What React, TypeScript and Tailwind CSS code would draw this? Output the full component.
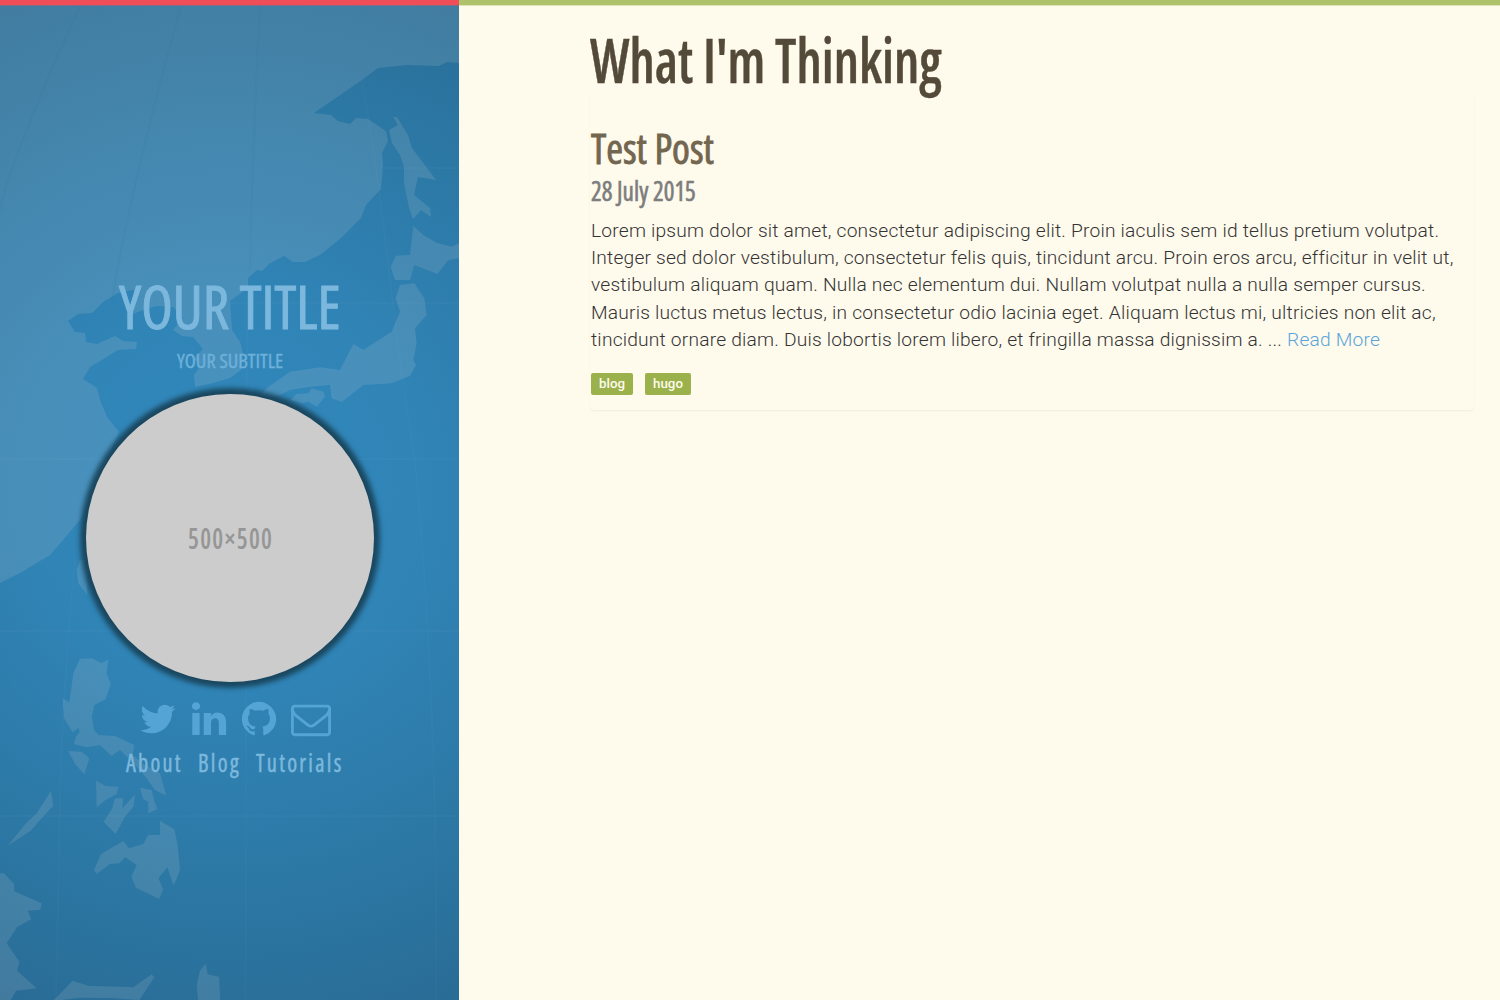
import { useLayoutEffect, useRef, useState, type ReactNode } from "react";

/* Squeezes a line of display text to a fixed width. */
function Fit({ w, className = "", children }: { w: number; className?: string; children: ReactNode }) {
  const ref = useRef<HTMLSpanElement>(null);
  const [scale, setScale] = useState(1);
  useLayoutEffect(() => {
    setScale(w / ref.current!.offsetWidth);
  }, [w]);
  return (
    <span className="block shrink-0" style={{ width: w }}>
      <span
        ref={ref}
        className={"inline-block origin-left whitespace-nowrap " + className}
        style={{ transform: `scaleX(${scale})` }}
      >
        {children}
      </span>
    </span>
  );
}

const DISPLAY = "font-['Open_Sans',sans-serif] [font-stretch:75%]";

const LAND = "rgba(250,232,225,0.12)";

function WorldMap() {
  return (
    <svg className="absolute inset-0 h-full w-full" viewBox="0 0 459 1000" preserveAspectRatio="none" aria-hidden="true">
      <defs>
        <radialGradient id="sea" gradientUnits="userSpaceOnUse" cx="230" cy="490" r="560">
          <stop offset="0" stopColor="#3289bd" />
          <stop offset="0.35" stopColor="#3084b6" />
          <stop offset="0.7" stopColor="#2c78a5" />
          <stop offset="1" stopColor="#296c96" />
        </radialGradient>
      </defs>
      <rect width="459" height="1000" fill="url(#sea)" />
      <g fill={LAND}>
        <path d="M0 0H459V63L447 62 439 66 408 65 378 68 362 80 314 113 331 115 338 121 350 124 356 118 368 119 386 131 388 141 382 153 383 165 381 189 366 205 361 218 340 239 320 255 305 262 293 262 284 256 269 264 262 271 257 270 248 278V288L230 301 232 330 240 342 243 353 241 370 230 378 213 383 195 387 194 375 200 367 194 358 203 349 193 337 182 336 173 330 183 318 173 307 157 306 143 310 123 318 133 312 137 297 133 290 118 293 103 302 92 313 78 314 68 321 75 332 85 333 86 342 97 344 115 336 123 341 137 342 136 349 118 350 105 358 90 367 83 379 97 388 100 400 107 417 119 432 100 475 80 520 63 540 50 555 20 573 0 583Z" />
        <path d="M393 117L397 117 408 135 412 148 436 180 418 177 414 195 430 208 431 217 421 210 413 219 409 208 404 183 404 167 400 155 392 143 389 130 398 125Z" />
        <g transform="translate(300 30) scale(.33333)">
          <path d="M340 588L370 615 410 638 455 650 477 640V685L445 690 412 732 343 705 330 750H285L272 710 288 677 330 675Z" />
        </g>
        <g transform="translate(0 250) scale(.33333)">
          <path d="M1200 105L1243 100 1273 145 1280 195 1245 235 1250 280 1240 330 1248 345 1230 378 1175 400 1090 405 1025 456 995 445 990 405 930 410 870 420 830 440 780 440 800 415 870 365 960 352 1020 360 1060 282 1090 300 1175 245 1200 185 1187 145Z" />
          <path d="M870 450L890 432 925 430 935 415 970 425 975 440 950 470 925 455 905 460Z" />
        </g>
        <g transform="translate(0 540) scale(.33333)">
          <path d="M240 60L230 90 235 130 262 165 262 60Z" />
          <path d="M240 356L275 355 305 370 325 358 320 400 332 432 317 478 283 495 275 530 282 570 295 585 345 588 403 615 398 645 430 672 480 700 499 767 465 750 440 715 400 668 360 630 335 647 300 615 260 622 222 612 228 590 240 575 235 563 218 577 192 535 188 475 208 487 220 400Z" />
          <path d="M205 633L245 635 268 655 253 703 225 672Z" />
          <path d="M288 722L317 738 355 740 350 762 317 780 290 802Z" />
          <path d="M345 775H370L367 805 405 764 400 800 375 830 347 882 311 845 337 805Z" />
          <path d="M420 743L455 750 462 780 472 808 445 820V785L430 778Z" />
          <path d="M153 753L160 797 125 835 92 872 23 917 78 850 110 820Z" />
          <path d="M480 842L523 868 533 915 540 990 521 1037 502 982 475 1015 490 1048 477 1077 408 1043 394 1010 410 975 376 952 358 970 330 972 290 1002 282 990 303 942 370 903 387 925 430 912 445 885H480Z" />
          <path d="M0 1000H12L42 1032 43 1054 125 1090 121 1109 84 1112 93 1138 51 1161 20 1210 58 1265 51 1292 110 1345 48 1352 32 1380H0Z" />
          <path d="M162 1380L218 1322 265 1337 400 1342 455 1303 463 1312 418 1380 330 1374 240 1373 185 1380Z" />
          <path d="M617 1272L623 1303 657 1310 661 1380H594L590 1335 600 1292Z" />
        </g>
      </g>
      <g fill="none" stroke="#ffffff" strokeOpacity="0.02" strokeWidth="2">
        <path d="M383 168H459M230 303H459M0 459H459M0 631H459M0 816H459" />
        <path d="M248 278Q245 500 246 700T245 1000M362 80Q376 160 390 280T415 460Q438 700 436 1000M75 560Q62 700 60 800T56 1000" />
      </g>
      <g fill="none" stroke="#1f5f8c" strokeOpacity="0.06" strokeWidth="2">
        <path d="M260 6Q252 160 250 270M181 6Q130 190 112 300M80 6Q10 160 0 210" />
      </g>
    </svg>
  );
}

const ICONS = {
  twitter: "M1684 408q-67 98-162 167 1 14 1 42 0 130-38 259.5t-115.5 248.5-184.5 210.5-258 146-323 54.5q-271 0-496-145 35 4 78 4 225 0 401-138-105-2-188-64.5t-114-159.5q33 5 61 5 43 0 85-11-112-23-185.5-111.5t-73.5-205.5v-4q68 38 146 41-66-44-105-115t-39-154q0-88 44-163 121 149 294.5 238.5t371.5 99.5q-8-38-8-74 0-134 94.5-228.5t228.5-94.5q140 0 236 102 109-21 205-78-37 115-142 178 93-10 186-50z",
  linkedin: "M477 625v991h-330v-991h330zm21-306q1 73-50.5 122t-135.5 49h-2q-82 0-132-49t-50-122q0-74 51.5-122.5t134.5-48.5 133 48.5 51 122.5zm1166 729v568h-329v-530q0-105-40.5-164.5t-126.5-59.5q-63 0-105.5 34.5t-63.5 85.5q-11 30-11 81v553h-329q2-399 2-647t-1-296l-1-48h329v144h-2q20-32 41-56t56.5-52 87-43.5 114.5-15.5q171 0 275 113.5t104 332.5z",
  github: "M896 128q209 0 385.5 103t279.5 279.5 103 385.5q0 251-146.5 451.5t-378.5 277.5q-27 5-40-7t-13-30q0-3 .5-76.5t.5-134.5q0-97-52-142 57-6 102.5-18t94-39 81-66.5 53-105 20.5-150.5q0-119-79-206 37-91-8-204-28-9-81 11t-92 44l-38 24q-93-26-192-26t-192 26q-16-11-42.5-27t-83.5-38.5-85-13.5q-45 113-8 204-79 87-79 206 0 85 20.5 150t52.5 105 80.5 67 94 39 102.5 18q-39 36-49 103-21 10-45 15t-57 5-65.5-21.5-55.5-62.5q-19-32-48.5-52t-49.5-24l-20-3q-21 0-29 4.5t-5 11.5 9 14 13 12l7 5q22 10 43.5 38t31.5 51l10 23q13 38 44 61.5t67 30 69.5 7 55.5-3.5l23-4q0 38 .5 88.5t.5 54.5q0 18-13 30t-40 7q-232-77-378.5-277.5t-146.5-451.5q0-209 103-385.5t279.5-279.5 385.5-103z",
  envelope: "M1664 1504v-768q-32 36-69 66-268 206-426 338-51 43-83 67t-86.5 48.5-102.5 24.5h-2q-48 0-102.5-24.5t-86.5-48.5-83-67q-158-132-426-338-37-30-69-66v768q0 13 9.5 22.5t22.5 9.5h1472q13 0 22.5-9.5t9.5-22.5zm0-1051v-24.5l-.5-13-3-12.5-5.5-9-9-7.5-14-2.5h-1472q-13 0-22.5 9.5t-9.5 22.5q0 168 147 284 193 152 401 317 6 5 35 29.5t46 37.5 44.5 31.5 50.5 27.5 43 9h2q20 0 43-9t50.5-27.5 44.5-31.5 46-37.5 35-29.5q208-165 401-317 54-43 100.5-115.5t46.5-131.5zm128-37v1088q0 66-47 113t-113 47h-1472q-66 0-113-47t-47-113v-1088q0-66 47-113t113-47h1472q66 0 113 47t47 113z",
};

function Icon({ d, className = "" }: { d: string; className?: string }) {
  return (
    <svg viewBox="0 0 1792 1792" className={"h-10 w-10 shrink-0 fill-[#55a4d6] " + className}>
      <path d={d} />
    </svg>
  );
}

function Sidebar() {
  return (
    <aside className="relative h-full w-[459px] shrink-0 overflow-hidden">
      <WorldMap />
      <div className={"relative flex flex-col " + DISPLAY}>
        <div className="h-[6px] border-b border-[#ef4d58]/40 bg-[#ef4d58] bg-clip-padding" />
        <h1 className="mt-[268px] h-[64px] pl-[119px] text-[61px] leading-[64px] text-[#7cb8dd] [-webkit-text-stroke:1px_#7cb8dd]">
          <Fit w={222}>YOUR TITLE</Fit>
        </h1>
        <h2 className="mt-[9px] h-[26px] pl-[177px] text-[20.5px] leading-[26px] text-[#6db0da] [-webkit-text-stroke:0.4px_#6db0da]">
          <Fit w={106}>YOUR SUBTITLE</Fit>
        </h2>
        <div className="mt-[21px] ml-[86px] flex h-[288px] w-[288px] items-center justify-center rounded-full bg-[#cccccc] text-[28px] font-semibold text-[#969696] shadow-[0_0_5px_6px_#1a475f]">
          <Fit w={85} className="tracking-[1.5px]">500×500</Fit>
        </div>
        <div className="mt-[16.5px] flex h-10 pl-[138px]">
          <Icon d={ICONS.twitter} />
          <Icon d={ICONS.linkedin} className="ml-[10.5px]" />
          <Icon d={ICONS.github} className="ml-[10px]" />
          <Icon d={ICONS.envelope} className="ml-[12.5px]" />
        </div>
        <nav className="mt-[8.5px] flex gap-[15px] pl-[126px] text-[24.5px] leading-[32px] text-[#7cb8dd] [-webkit-text-stroke:0.5px_#7cb8dd]">
          <Fit w={57} className="tracking-[2.5px]">About</Fit>
          <Fit w={43} className="tracking-[2.5px]">Blog</Fit>
          <Fit w={88} className="tracking-[2.5px]">Tutorials</Fit>
        </nav>
      </div>
    </aside>
  );
}

function Tag({ className, children }: { className: string; children: ReactNode }) {
  return (
    <span className={"flex h-[22px] items-center justify-center rounded-[2px] bg-[#9bb24c] " + className}>{children}</span>
  );
}

export default function App() {
  return (
    <div className="flex h-[1000px] w-full overflow-hidden bg-[#fefaec]">
      <Sidebar />
      <main className="min-w-0 flex-1 text-[#333]">
        <div className="h-[6px] border-b border-[#aec16b]/40 bg-[#aec16b] bg-clip-padding" />
        <div className="pl-[131px]">
          <h1 className={"mt-[22px] h-[64px] text-[61px] leading-[64px] font-semibold text-[#544a39] [-webkit-text-stroke:0.4px_#544a39] " + DISPLAY}>
            <Fit w={352}>What I'm Thinking</Fit>
          </h1>
          <article className="w-[884px] rounded-[4px] pt-[32px] pb-[15px] pl-px shadow-[0_1px_2px_rgba(0,0,0,0.06)]">
            <h2 className={"h-[48px] text-[42px] leading-[48px] text-[#736650] [-webkit-text-stroke:0.9px_#736650] " + DISPLAY}>
              <Fit w={122.5}>Test Post</Fit>
            </h2>
            <h3 className={"h-[38px] text-[26.5px] leading-[38px] text-[#7d7d7d] [-webkit-text-stroke:0.6px_#7d7d7d] " + DISPLAY}>
              <Fit w={104.5}>28 July 2015</Fit>
            </h3>
            <p className="mt-[6.5px] font-['Roboto',sans-serif] text-[19.2px] leading-[27.43px] font-light tracking-[0.2px] whitespace-nowrap">
              Lorem ipsum dolor sit amet, consectetur adipiscing elit. Proin iaculis sem id tellus pretium volutpat.<br />
              Integer sed dolor vestibulum, consectetur felis quis, tincidunt arcu. Proin eros arcu, efficitur in velit ut,<br />
              vestibulum aliquam quam. Nulla nec elementum dui. Nullam volutpat nulla a nulla semper cursus.<br />
              Mauris luctus metus lectus, in consectetur odio lacinia eget. Aliquam lectus mi, ultricies non elit ac,<br />
              tincidunt ornare diam. Duis lobortis lorem libero, et fringilla massa dignissim a. ... <a className="text-[#5ba5db]">Read More</a>
            </p>
            <div className="mt-[19.5px] flex gap-3 font-['Roboto',sans-serif] text-[13.3px] font-medium text-[#fefaec]">
              <Tag className="w-[42px]">blog</Tag>
              <Tag className="w-[46px]">hugo</Tag>
            </div>
          </article>
        </div>
      </main>
    </div>
  );
}
